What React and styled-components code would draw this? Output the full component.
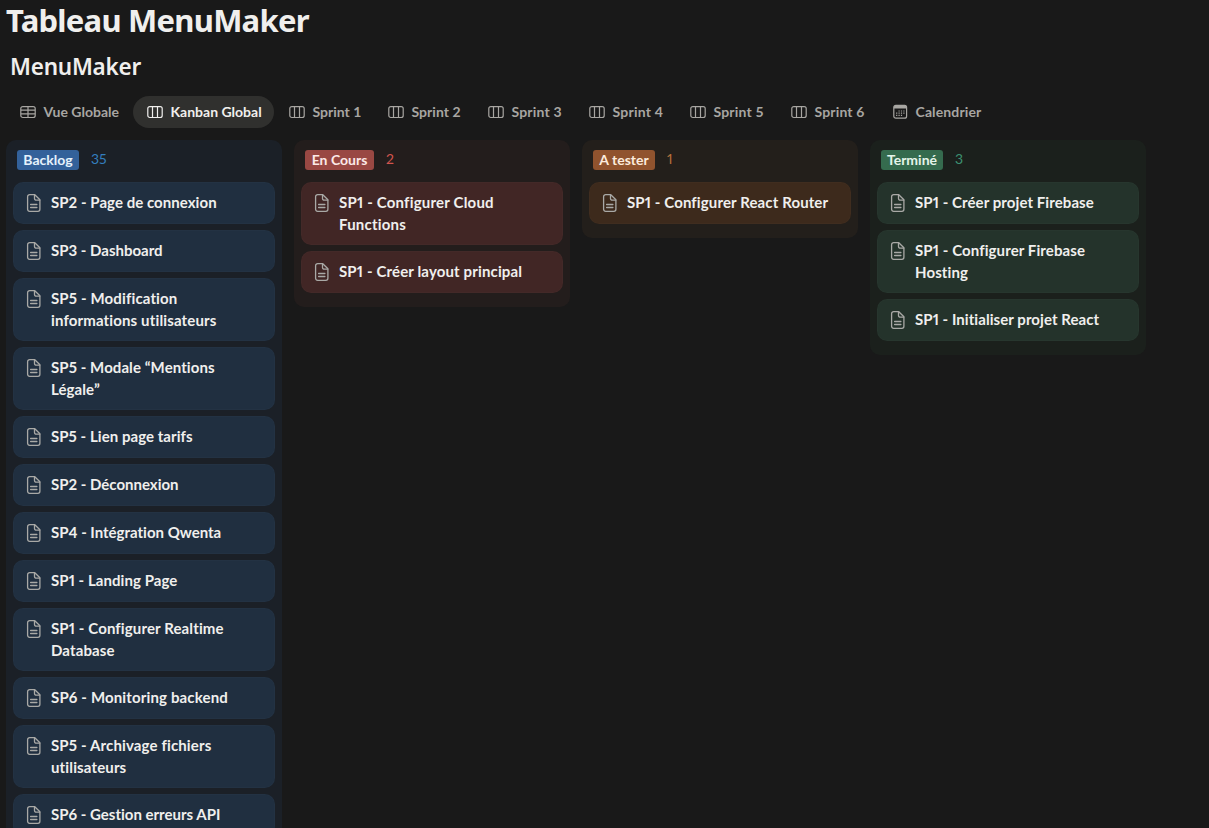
import React, { useState } from 'react';
import styled, { createGlobalStyle } from 'styled-components';

const GlobalStyle = createGlobalStyle`
  * {
    box-sizing: border-box;
  }

  body {
    margin: 0;
    background: #191919;
    color: #f0efed;
    font-family: 'Lato', 'Noto Sans', sans-serif;
    font-variant-ligatures: none;
    font-feature-settings: 'pnum' 1;
    overflow: hidden;
  }
`;

const Page = styled.main`
  height: 828px;
  overflow: hidden;
  padding-left: 6px;
`;

const PageTitle = styled.h1`
  margin: 0;
  height: 48px;
  font-family: 'Noto Sans', sans-serif;
  font-size: 31px;
  line-height: 40px;
  font-weight: 700;
  letter-spacing: -0.75px;
  white-space: nowrap;
`;

const BoardTitle = styled.h2`
  margin: 0;
  padding-left: 4px;
  height: 48px;
  font-family: 'Noto Sans', sans-serif;
  font-size: 22.5px;
  line-height: 37px;
  font-weight: 600;
  letter-spacing: -0.22px;
  white-space: nowrap;
`;

const Tabs = styled.nav`
  display: flex;
  gap: 1px;
  height: 44px;
`;

const Tab = styled.button`
  display: flex;
  align-items: center;
  flex: none;
  gap: 7.5px;
  width: ${props => props.$width}px;
  height: 32px;
  padding: 0 0 0 14px;
  border: none;
  border-radius: 16px;
  background: ${props => props.$active ? '#30302e' : 'transparent'};
  color: ${props => props.$active ? '#f0efed' : '#a8a6a2'};
  font-family: inherit;
  font-size: 14px;
  font-weight: 700;
  line-height: 20px;
  letter-spacing: ${props => props.$spacing || 0}px;
  white-space: nowrap;
  cursor: pointer;

  svg {
    flex: none;
  }
`;

const Board = styled.div`
  display: flex;
  align-items: flex-start;
  gap: 12px;
`;

const Column = styled.section`
  flex: none;
  width: 276px;
  padding: 10px 7px 14px;
  border-radius: 10px;
  background: ${props => props.$bg};
`;

const ColumnHeader = styled.header`
  display: flex;
  gap: 12px;
  height: 32px;
  padding-left: 4px;
`;

const Badge = styled.span`
  width: ${props => props.$width}px;
  height: 20px;
  border-radius: 3px;
  background: ${props => props.$bg};
  color: ${props => props.$color};
  font-size: 14px;
  font-weight: 700;
  line-height: 20px;
  text-align: center;
  white-space: nowrap;
`;

const Count = styled.span`
  color: ${props => props.$color};
  font-size: 14px;
  line-height: 18px;
`;

const CardList = styled.div`
  display: flex;
  flex-direction: column;
  gap: 6px;
`;

const Card = styled.article`
  display: flex;
  gap: 9px;
  height: ${props => props.$tall ? 63 : 42}px;
  padding: 9px 12px;
  border-radius: 10px;
  background: ${props => props.$bg};
  box-shadow: inset 0 0 0 1px rgba(255, 255, 255, 0.015);

  svg {
    flex: none;
    margin-top: 2px;
    color: #a9a9a6;
  }
`;

const CardTitle = styled.div`
  font-size: 15px;
  font-weight: 700;
  line-height: 22px;
  letter-spacing: ${props => props.$spacing || 0}px;
  white-space: pre;
`;

const PageIcon = () => (
  <svg width="17" height="20" viewBox="0 0 17 20" fill="none" stroke="currentColor" strokeWidth="1.3" strokeLinejoin="round" strokeLinecap="round">
    <path d="M4.6 1.7h5.2l5.1 5.1v9.5a2 2 0 0 1-2 2H4.6a2 2 0 0 1-2-2V3.7a2 2 0 0 1 2-2Z" />
    <path d="M9.5 1.9v3.6a1.7 1.7 0 0 0 1.7 1.7h3.5M5.6 11.5h6.3M5.6 14.5h6.3" />
  </svg>
);

const TableIcon = () => (
  <svg width="16" height="16" viewBox="0 0 16 16" fill="none" stroke="currentColor" strokeWidth="1.2">
    <rect x="0.8" y="2.6" width="14.4" height="10.9" rx="2" />
    <path d="M.8 6.2h14.4M.8 9.8h14.4M8 2.6v10.9" />
  </svg>
);

const BoardIcon = () => (
  <svg width="16" height="16" viewBox="0 0 16 16" fill="none" stroke="currentColor" strokeWidth="1.2">
    <rect x="0.8" y="2.6" width="14.4" height="10.9" rx="2" />
    <path d="M5.5 2.6v10.9M10.5 2.6v10.9" />
  </svg>
);

const CalendarIcon = () => (
  <svg width="15" height="16" viewBox="0 0 15 16" fill="none">
    <rect x="0.8" y="1.4" width="12.8" height="12.8" rx="2" stroke="currentColor" strokeWidth="1.2" />
    <path d="M.8 4.6V3.4a2 2 0 0 1 2-2h8.8a2 2 0 0 1 2 2v1.2Z" fill="currentColor" />
    <path d="M5.5 7h6M3.1 9.2h8.4M3.1 11.4h6" stroke="currentColor" strokeWidth="1.2" strokeDasharray="1.2 1.2" />
  </svg>
);

const icons = { table: TableIcon, board: BoardIcon, calendar: CalendarIcon };

const tabs = [
  { label: 'Vue Globale', icon: 'table', width: 126 },
  { label: 'Kanban Global', icon: 'board', width: 141 },
  { label: 'Sprint 1', icon: 'board', width: 98 },
  { label: 'Sprint 2', icon: 'board', width: 99, spacing: 0.05 },
  { label: 'Sprint 3', icon: 'board', width: 100, spacing: 0.18 },
  { label: 'Sprint 4', icon: 'board', width: 100, spacing: 0.22 },
  { label: 'Sprint 5', icon: 'board', width: 100, spacing: 0.18 },
  { label: 'Sprint 6', icon: 'board', width: 101, spacing: 0.15 },
  { label: 'Calendrier', icon: 'calendar', width: 116, spacing: 0.12 },
];

const columns = [
  {
    name: 'Backlog',
    count: 35,
    badgeWidth: 62,
    colors: { bg: '#1b2027', card: '#202f40', badge: '#33619a', text: '#e5f2fc', count: '#337ebd' },
    cards: [
      { title: 'SP2 - Page de connexion', spacing: 0.05 },
      { title: 'SP3 - Dashboard' },
      { title: 'SP5 - Modification\ninformations utilisateurs', spacing: 0.14 },
      { title: 'SP5 - Modale “Mentions\nLégale”', spacing: 0.08 },
      { title: 'SP5 - Lien page tarifs', spacing: 0.05 },
      { title: 'SP2 - Déconnexion' },
      { title: 'SP4 - Intégration Qwenta' },
      { title: 'SP1 - Landing Page', spacing: 0.06 },
      { title: 'SP1 - Configurer Realtime\nDatabase', spacing: 0.12 },
      { title: 'SP6 - Monitoring backend', spacing: 0.15 },
      { title: 'SP5 - Archivage fichiers\nutilisateurs', spacing: 0.14 },
      { title: 'SP6 - Gestion erreurs API' },
    ],
  },
  {
    name: 'En Cours',
    count: 2,
    badgeWidth: 69,
    colors: { bg: '#231d1c', card: '#412625', badge: '#994843', text: '#fce9e7', count: '#d1544d' },
    cards: [
      { title: 'SP1 - Configurer Cloud\nFunctions', spacing: 0.2 },
      { title: 'SP1 - Créer layout principal', spacing: 0.14 },
    ],
  },
  {
    name: 'A tester',
    count: 1,
    badgeWidth: 62,
    colors: { bg: '#231f1b', card: '#3d2a1c', badge: '#90532e', text: '#fcebdd', count: '#b5713b' },
    cards: [{ title: 'SP1 - Configurer React Router', spacing: 0.12 }],
  },
  {
    name: 'Terminé',
    count: 3,
    badgeWidth: 62,
    colors: { bg: '#1b201c', card: '#24332b', badge: '#356b4e', text: '#e4f5ea', count: '#3c9171' },
    cards: [
      { title: 'SP1 - Créer projet Firebase', spacing: 0.08 },
      { title: 'SP1 - Configurer Firebase\nHosting', spacing: 0.1 },
      { title: 'SP1 - Initialiser projet React', spacing: 0.06 },
    ],
  },
];

const BoardColumn = ({ column }) => {
  const { colors } = column;

  return (
    <Column $bg={colors.bg}>
      <ColumnHeader>
        <Badge $bg={colors.badge} $color={colors.text} $width={column.badgeWidth}>
          {column.name}
        </Badge>
        <Count $color={colors.count}>{column.count}</Count>
      </ColumnHeader>
      <CardList>
        {column.cards.map((card) => (
          <Card key={card.title} $bg={colors.card} $tall={card.title.includes('\n')}>
            <PageIcon />
            <CardTitle $spacing={card.spacing}>{card.title}</CardTitle>
          </Card>
        ))}
      </CardList>
    </Column>
  );
};

const App = () => {
  const [activeTab, setActiveTab] = useState('Kanban Global');

  return (
    <>
      <GlobalStyle />
      <Page>
        <PageTitle>Tableau MenuMaker</PageTitle>
        <BoardTitle>MenuMaker</BoardTitle>
        <Tabs>
          {tabs.map((tab) => {
            const Icon = icons[tab.icon];
            return (
              <Tab
                key={tab.label}
                $active={tab.label === activeTab}
                $width={tab.width}
                $spacing={tab.spacing}
                onClick={() => setActiveTab(tab.label)}
              >
                <Icon />
                {tab.label}
              </Tab>
            );
          })}
        </Tabs>
        <Board>
          {columns.map((column) => (
            <BoardColumn key={column.name} column={column} />
          ))}
        </Board>
      </Page>
    </>
  );
};

export default App;
